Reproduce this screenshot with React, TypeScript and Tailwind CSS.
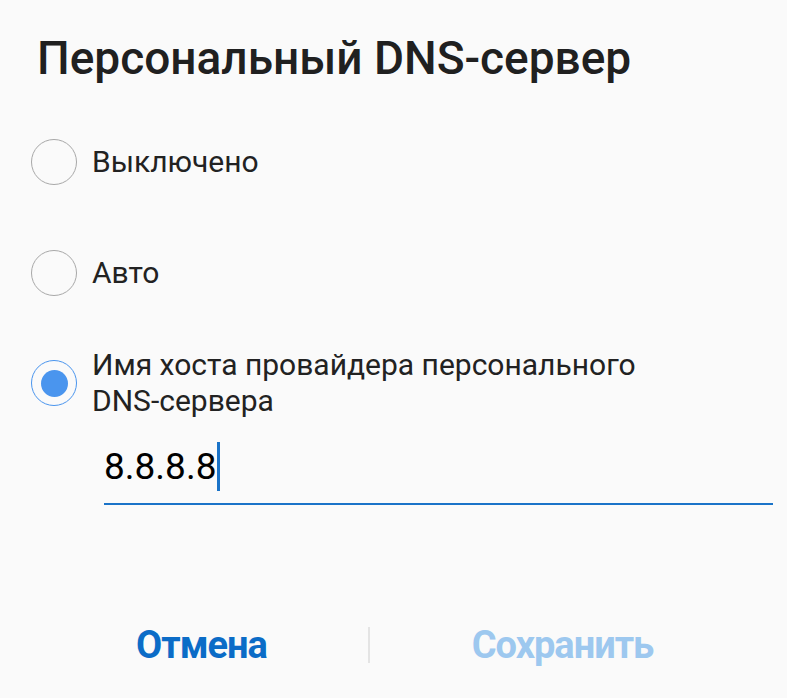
import { useState } from "react";

const options = [
  { id: "off", label: "Выключено" },
  { id: "auto", label: "Авто" },
  { id: "host", label: "Имя хоста провайдера персонального DNS-сервера" },
];

function Radio({ checked }: { checked: boolean }) {
  return (
    <span
      className={`flex h-[46px] w-[46px] shrink-0 items-center justify-center rounded-full border-[1.5px] ${
        checked ? "border-[#4a95ee]" : "border-[#a8a8a8]"
      }`}
    >
      {checked && <span className="h-[27px] w-[27px] rounded-full bg-[#4a95ee]" />}
    </span>
  );
}

export default function App() {
  const [selected, setSelected] = useState("host");

  return (
    <div
      className="h-[698px] w-[787px] bg-[#fafafa] text-[#222]"
      style={{ fontFamily: "Roboto, 'Noto Sans', sans-serif" }}
    >
      <h1 className="pl-[37px] pt-[35px] text-[46px] font-medium leading-none text-[#202020]">
        Персональный DNS-сервер
      </h1>

      <div className="mt-[25px] flex flex-col pl-[31px]">
        {options.map((opt) => (
          <button
            key={opt.id}
            onClick={() => setSelected(opt.id)}
            className={`flex items-center gap-[15px] text-left ${
              opt.id === "host" ? "h-[110px]" : "h-[111px]"
            }`}
          >
            <Radio checked={selected === opt.id} />
            <span className="max-w-[560px] text-[30px] leading-[36px]">{opt.label}</span>
          </button>
        ))}
      </div>

      <div className="ml-[104px] mr-[14px] flex h-[67px] items-center border-b-2 border-[#1a73c8] pb-[9px]">
        <span className="text-[37px] leading-none text-black">8.8.8.8</span>
        <span className="ml-[1px] h-[49px] w-[3px] bg-[#1a73c8]" />
      </div>

      <div className="ml-[35px] mt-[110px] flex h-[60px] items-center">
        <button className="w-[333px] text-[38px] font-bold tracking-[-1px] text-[#0b6cc7]">
          Отмена
        </button>
        <span className="h-[36px] w-[2px] bg-[#e4e4e4]" />
        <button className="w-[385px] text-[38px] font-bold tracking-[-1px] text-[#9dc8ef]">
          Сохранить
        </button>
      </div>
    </div>
  );
}
